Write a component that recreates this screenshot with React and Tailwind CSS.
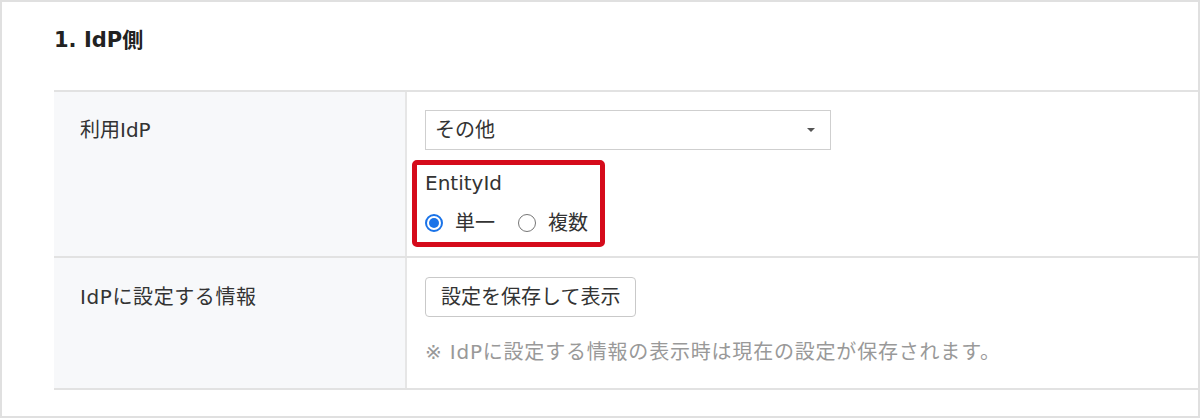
const font = { fontFamily: '"DejaVu Sans", "Noto Sans CJK JP", sans-serif' }

function Radio({ checked, label }) {
  return (
    <label className="flex items-center gap-[12px]">
      <span
        className={
          checked
            ? 'flex h-[18px] w-[18px] items-center justify-center rounded-full border-2 border-[#1a73e8] bg-white'
            : 'flex h-[18px] w-[18px] items-center justify-center rounded-full border-[1.5px] border-[#767676] bg-white'
        }
      >
        {checked && <span className="h-[10px] w-[10px] rounded-full bg-[#1a73e8]" />}
      </span>
      <span>{label}</span>
    </label>
  )
}

export default function App() {
  return (
    <div
      className="h-[418px] w-[1200px] border-2 border-[#e0e0e0] bg-white pl-[52px] text-[20px] text-[#333]"
      style={font}
    >
      <h2 className="pt-[24px] text-[21px] font-bold leading-[28px] text-[#222]">1. IdP側</h2>

      <div className="mt-[36px] border-t-2 border-[#e2e2e2]">
        <div className="flex h-[166px] border-b-2 border-[#e2e2e2]">
          <div className="w-[353px] shrink-0 border-r-2 border-[#e6e6e6] bg-[#f7f8fa] pl-[26px] pt-[24px] leading-[28px]">
            利用IdP
          </div>
          <div className="flex-1 pl-[18px] pt-[18px]">
            <div className="flex h-[40px] w-[406px] items-center justify-between border border-[#cfcfcf] pl-[9px] pr-[14px]">
              <span className="leading-[28px]">その他</span>
              <svg width="10" height="6" viewBox="0 0 10 6">
                <path d="M1 1h8L5 5z" fill="#555" />
              </svg>
            </div>
            <div className="relative mt-[19px] w-fit">
              <div className="leading-[28px]">EntityId</div>
              <div className="mt-[12px] flex items-center gap-[23px] leading-[28px]">
                <Radio checked label="単一" />
                <Radio label="複数" />
              </div>
              <div className="pointer-events-none absolute left-[-13px] top-[-9px] h-[87px] w-[193px] rounded-[5px] border-[5px] border-[#d50b1b]" />
            </div>
          </div>
        </div>

        <div className="flex h-[132px] border-b-2 border-[#e2e2e2]">
          <div className="w-[353px] shrink-0 border-r-2 border-[#e6e6e6] bg-[#f7f8fa] pl-[26px] pt-[25px] leading-[28px] tracking-[0.6px]">
            IdPに設定する情報
          </div>
          <div className="flex-1 pl-[18px] pt-[19px]">
            <button className="h-[40px] rounded-[4px] border border-[#c9c9c9] bg-white px-[15px] leading-[28px] text-[#333]">
              設定を保存して表示
            </button>
            <p className="mt-[21px] leading-[28px] tracking-[0.8px] text-[#999]">
              ※ IdPに設定する情報の表示時は現在の設定が保存されます。
            </p>
          </div>
        </div>
      </div>
    </div>
  )
}
